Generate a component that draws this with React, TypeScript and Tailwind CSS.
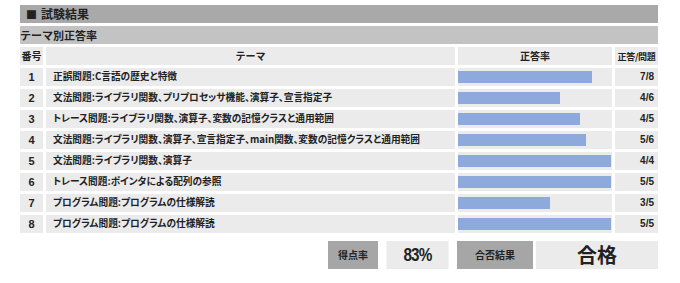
const ROWS = [
  { no: 1, theme: "正誤問題:C言語の歴史と特徴", ok: 7, total: 8 },
  { no: 2, theme: "文法問題:ライブラリ関数、プリプロセッサ機能、演算子、宣言指定子", ok: 4, total: 6 },
  { no: 3, theme: "トレース問題:ライブラリ関数、演算子、変数の記憶クラスと通用範囲", ok: 4, total: 5 },
  { no: 4, theme: "文法問題:ライブラリ関数、演算子、宣言指定子、main関数、変数の記憶クラスと通用範囲", ok: 5, total: 6 },
  { no: 5, theme: "文法問題:ライブラリ関数、演算子", ok: 4, total: 4 },
  { no: 6, theme: "トレース問題:ポインタによる配列の参照", ok: 5, total: 5 },
  { no: 7, theme: "プログラム問題:プログラムの仕様解読", ok: 3, total: 5 },
  { no: 8, theme: "プログラム問題:プログラムの仕様解読", ok: 5, total: 5 },
];

const FONT = "font-['Noto_Sans_CJK_JP','Noto_Sans',sans-serif]";

export default function App() {
  return (
    <div className={`w-[680px] h-[283px] bg-white pl-[20px] pr-[22px] pt-[5px] text-[#222] ${FONT}`}>
      {/* Title */}
      <div className="h-[18px] bg-[#a9a9a9] flex items-center pl-[6px] text-[12px] font-bold leading-none">
        <span className="text-[11px] mr-[4px]">■</span>試験結果
      </div>
      <div className="mt-[3px] h-[18px] bg-[#c3c3c3] flex items-center text-[11px] font-bold leading-none">
        テーマ別正答率
      </div>

      {/* Table */}
      <div className="mt-[3px] grid grid-cols-[23px_409px_154px_43px] gap-[3px] text-[10px] font-bold leading-none">
        <div className="h-[18px] bg-[#ebebeb] flex items-center justify-center">番号</div>
        <div className="h-[18px] bg-[#ebebeb] flex items-center justify-center">テーマ</div>
        <div className="h-[18px] bg-[#ebebeb] flex items-center justify-center">正答率</div>
        <div className="h-[18px] bg-[#ebebeb] flex items-center justify-center text-[9px] tracking-[-0.3px]">正答/問題</div>

        {ROWS.map((r) => (
          <div key={r.no} className="contents">
            <div className="h-[18px] bg-[#ebebeb] flex items-center justify-center text-[11px] font-['Liberation_Sans',sans-serif]">
              {r.no}
            </div>
            <div className="h-[18px] bg-[#ebebeb] flex items-center pl-[7px] text-[9.7px] whitespace-nowrap overflow-hidden [font-feature-settings:'palt']">
              {r.theme}
            </div>
            <div className="h-[18px] bg-[#ebebeb] flex items-center">
              <div className="h-[12px] bg-[#8eaadc]" style={{ width: `${(r.ok / r.total) * 153}px` }} />
            </div>
            <div className="h-[18px] bg-[#ebebeb] flex items-center justify-end pr-[4px] text-[10px] font-['Liberation_Sans',sans-serif]">
              {r.ok}/{r.total}
            </div>
          </div>
        ))}
      </div>

      {/* Summary */}
      <div className="mt-[8px] flex justify-end gap-[3px] h-[28px] leading-none">
        <div className="w-[50px] bg-[#a6a6a6] flex items-center justify-center text-[10px] font-bold">得点率</div>
        <div className="w-[73px] bg-[#ebebeb] flex items-center justify-center text-[18px] font-bold font-['Liberation_Sans',sans-serif] tracking-[-1px] scale-x-[0.85]">
          83%
        </div>
        <div className="w-[76px] bg-[#a6a6a6] flex items-center justify-center text-[10px] font-bold">合否結果</div>
        <div className="w-[122px] bg-[#ebebeb] flex items-center justify-center text-[20px] font-bold">合格</div>
      </div>
    </div>
  );
}
